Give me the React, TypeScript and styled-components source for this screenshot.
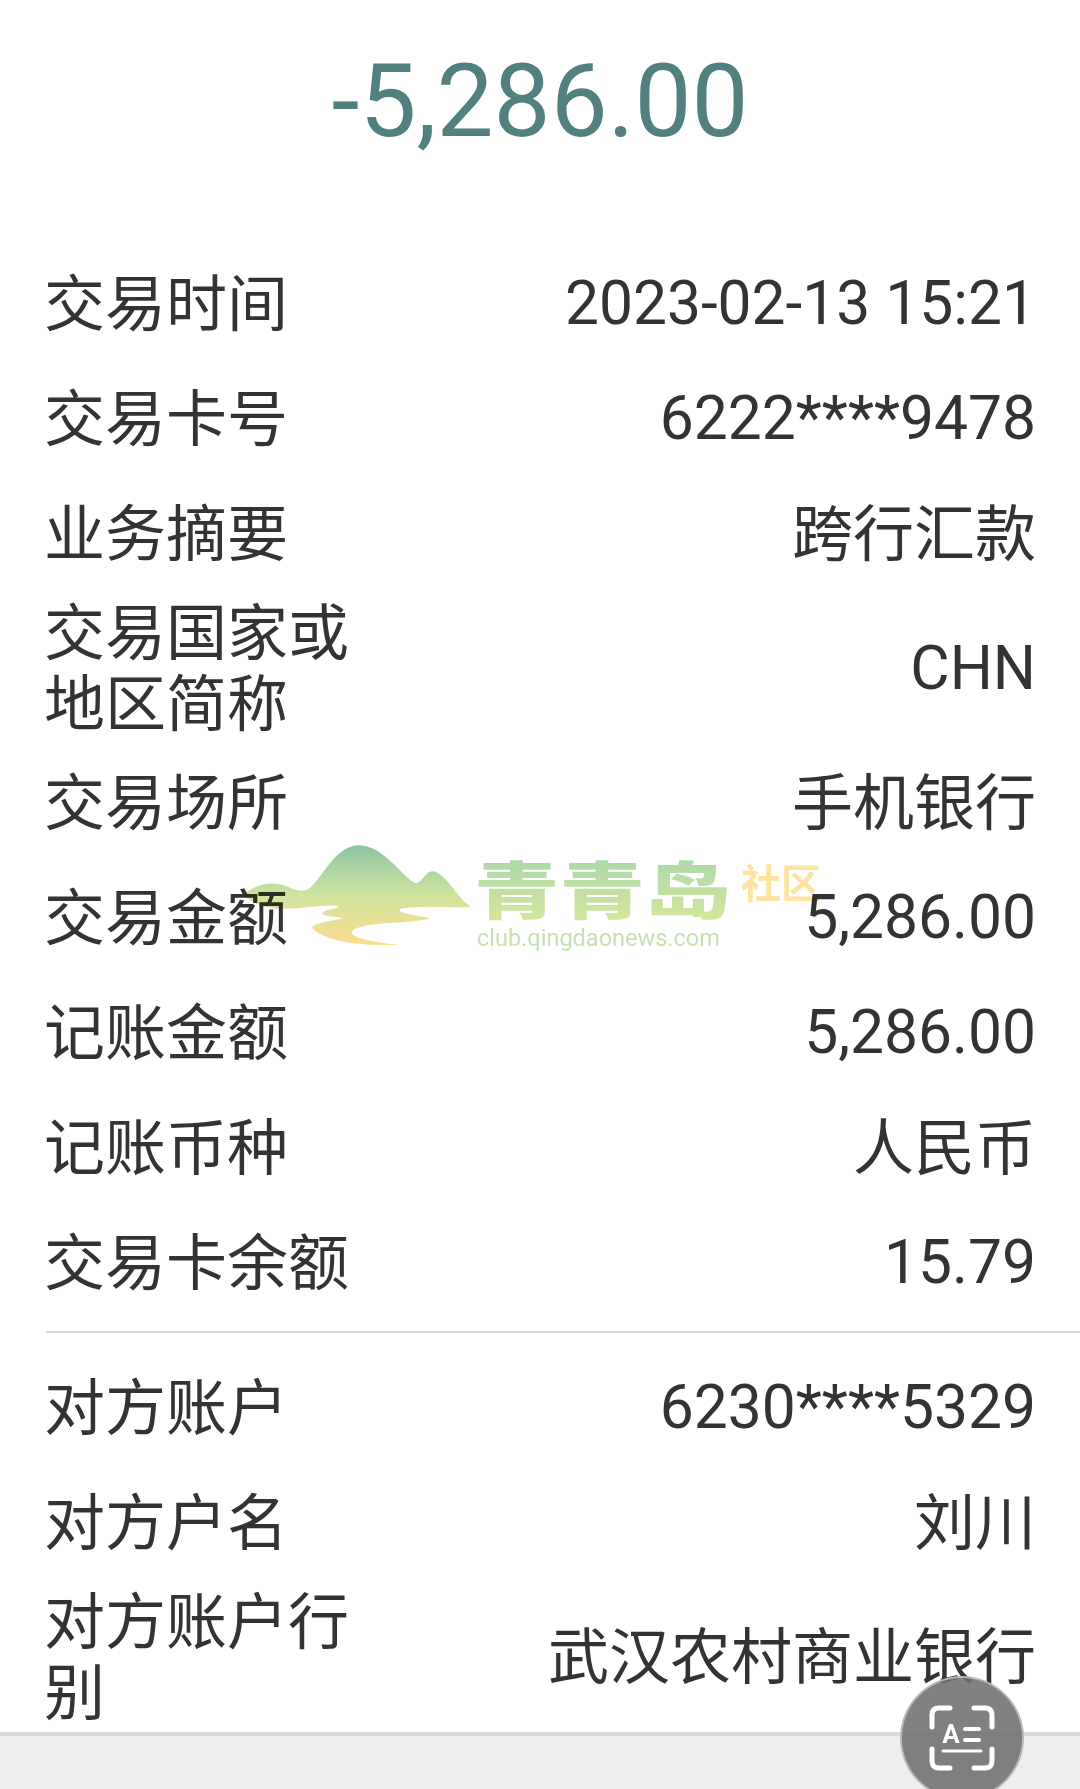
import React from 'react'
import styled, { createGlobalStyle } from 'styled-components';

const GlobalStyle = createGlobalStyle`
    html, body {
        margin: 0;
        height: 100%;
        background: #ffffff;
    }
    body {
        font-family: Roboto, "Noto Sans CJK SC", sans-serif;
        color: #333333;
    }
`;

interface RowType {
    label: string,
    value: string,
    cjk?: boolean
}

const topRows: RowType[] = [
    { label: "交易时间", value: "2023-02-13 15:21" },
    { label: "交易卡号", value: "6222****9478" },
    { label: "业务摘要", value: "跨行汇款", cjk: true },
    { label: "交易国家或地区简称", value: "CHN" },
    { label: "交易场所", value: "手机银行", cjk: true },
    { label: "交易金额", value: "5,286.00" },
    { label: "记账金额", value: "5,286.00" },
    { label: "记账币种", value: "人民币", cjk: true },
    { label: "交易卡余额", value: "15.79" },
];

const bottomRows: RowType[] = [
    { label: "对方账户", value: "6230****5329" },
    { label: "对方户名", value: "刘川", cjk: true },
    { label: "对方账户行别", value: "武汉农村商业银行", cjk: true },
];

function DetailRows({ rows }: { rows: RowType[] }) {
    return (
        <>
            {rows.map(row => (
                <Row key={row.label}>
                    <Label>{row.label}</Label>
                    <Value $cjk={row.cjk}>{row.value}</Value>
                </Row>
            ))}
        </>
    )
}

export default function App() {
    return (
        <Page>
            <GlobalStyle />
            <Amount>-5,286.00</Amount>
            <DetailRows rows={topRows} />
            <Divider />
            <DetailRows rows={bottomRows} />
            <BottomBar />

            <Watermark>
                <svg width="229" height="100" viewBox="100 75 545 300" preserveAspectRatio="none">
                    <defs>
                        <linearGradient id="hill" x1="0" y1="0" x2="0" y2="1">
                            <stop offset="0" stopColor="#8cc5a2" />
                            <stop offset="0.5" stopColor="#cfe5a0" />
                            <stop offset="1" stopColor="#fedc8e" />
                        </linearGradient>
                    </defs>
                    <path
                        fill="url(#hill)"
                        d="M105 225 C125 195 170 180 205 198 C225 210 245 222 265 200 C295 165 325 75 380 76 C435 78 475 160 510 188 C525 198 535 152 555 154 C585 160 610 230 645 262 C590 262 520 258 478 266 C465 275 490 282 545 293 C545 300 500 305 440 310 C395 315 355 325 362 342 C375 360 430 368 475 375 C400 378 300 370 268 325 C262 312 300 305 338 296 C335 288 290 292 292 278 C300 265 325 270 330 258 C300 252 240 268 190 266 C150 265 120 245 105 225 Z"
                    />
                </svg>
                <Brand>
                    <BrandName>青青岛</BrandName>
                    <BrandUrl>club.qingdaonews.com</BrandUrl>
                </Brand>
                <BrandTag>社区</BrandTag>
            </Watermark>

            <ScanButton>
                <svg width="66" height="66" viewBox="0 0 66 66" fill="none" stroke="#ffffff" strokeLinecap="round">
                    <path strokeWidth="5" d="M21 3 H10 Q3 3 3 10 V22" />
                    <path strokeWidth="5" d="M45 3 H56 Q63 3 63 10 V22" />
                    <path strokeWidth="5" d="M3 44 V56 Q3 63 10 63 H21" />
                    <path strokeWidth="5" d="M63 44 V56 Q63 63 56 63 H45" />
                    <path strokeWidth="3" d="M14 46 H52" />
                    <path strokeWidth="4" d="M36 24 H50" />
                    <path strokeWidth="4" d="M36 35 H50" />
                    <text x="22" y="38" textAnchor="middle" fill="#ffffff" stroke="none" fontFamily="Roboto, sans-serif" fontWeight="700" fontSize="26">A</text>
                </svg>
            </ScanButton>
        </Page>
    )
}

const Page = styled.div`
    position: relative;
    display: flex;
    flex-direction: column;
    height: 1789px;
    overflow: hidden;
    background: #ffffff;
`;

const Amount = styled.div`
    height: 245px;
    padding-top: 40px;
    box-sizing: border-box;
    text-align: center;
    font-size: 101.5px;
    line-height: 124px;
    color: #52807e;
`;

const Row = styled.div`
    display: flex;
    align-items: center;
    justify-content: space-between;
    box-sizing: border-box;
    min-height: 115px;
    padding: 3px 44px;
    font-size: 61px;
    line-height: 71px;
`;

const Label = styled.div`
    width: 310px;
    flex-shrink: 0;
    padding-top: 6px;
`;

const Value = styled.div<{ $cjk?: boolean }>`
    text-align: right;
    font-size: ${p => (p.$cjk ? "61px" : "60.5px")};
    padding-top: ${p => (p.$cjk ? "5px" : "2px")};
`;

const Divider = styled.div`
    height: 2px;
    margin: 12px 0 16px 46px;
    background: #d6d6d6;
`;

const BottomBar = styled.div`
    flex: 1;
    margin-top: -1px;
    border-top: 4px solid #d9d9d9;
    background: #eeeeee;
`;

const Watermark = styled.div`
    position: absolute;
    left: 242px;
    top: 845px;
    display: flex;
    align-items: flex-start;
    mix-blend-mode: multiply;
    pointer-events: none;
`;

const Brand = styled.div`
    display: flex;
    flex-direction: column;
    width: 252px;
    margin: 7px 0 0 3px;
`;

const BrandName = styled.div`
    font-family: "Noto Sans CJK SC", sans-serif;
    font-weight: 900;
    font-size: 62px;
    line-height: 70px;
    white-space: nowrap;
    transform: scaleX(1.38);
    transform-origin: left center;
    background: linear-gradient(#a7d7aa, #d6e79c);
    -webkit-background-clip: text;
    background-clip: text;
    color: transparent;
`;

const BrandUrl = styled.div`
    font-size: 23.5px;
    line-height: 26px;
    margin: 3px 0 0 3px;
    color: #c6e2b2;
    white-space: nowrap;
`;

const BrandTag = styled.div`
    margin: 11px 0 0 15px;
    font-family: "Noto Sans CJK SC", sans-serif;
    font-weight: 700;
    font-size: 40px;
    line-height: 50px;
    color: #fde4a2;
    white-space: nowrap;
`;

const ScanButton = styled.div`
    position: absolute;
    left: 900px;
    top: 1676px;
    display: flex;
    align-items: center;
    justify-content: center;
    box-sizing: border-box;
    width: 124px;
    height: 124px;
    border: 2px solid rgba(190, 190, 190, 0.9);
    border-radius: 50%;
    background: rgba(112, 112, 112, 0.88);
`;
